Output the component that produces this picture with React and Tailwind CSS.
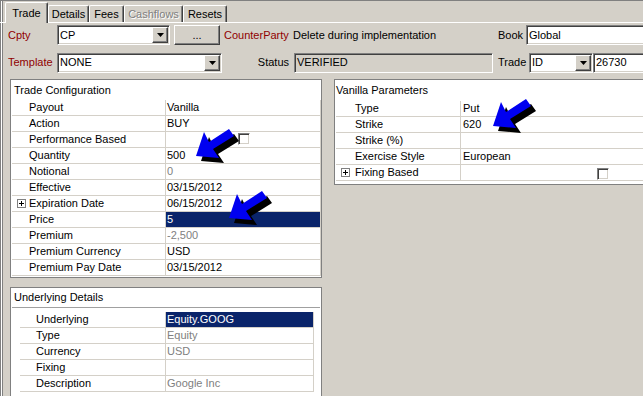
import React from 'react';

const sunken =
  'border border-t-[#808080] border-l-[#808080] border-b-white border-r-white shadow-[inset_1px_1px_0_#404040,inset_-1px_-1px_0_#d4d0c8]';
const raised =
  'border border-t-white border-l-white border-b-[#404040] border-r-[#404040] shadow-[inset_-1px_-1px_0_#808080] bg-[#d4d0c8]';

const tradeRows = [
  { label: 'Payout', value: 'Vanilla' },
  { label: 'Action', value: 'BUY' },
  { label: 'Performance Based', check: 'ml-[71px] mt-[1px]' },
  { label: 'Quantity', value: '500' },
  { label: 'Notional', value: '0', gray: true },
  { label: 'Effective', value: '03/15/2012' },
  { label: 'Expiration Date', value: '06/15/2012', plus: true },
  { label: 'Price', value: '5', sel: true },
  { label: 'Premium', value: '-2,500', gray: true },
  { label: 'Premium Currency', value: 'USD' },
  { label: 'Premium Pay Date', value: '03/15/2012' },
];

const underlyingRows = [
  { label: 'Underlying', value: 'Equity.GOOG', sel: true },
  { label: 'Type', value: 'Equity', gray: true },
  { label: 'Currency', value: 'USD', gray: true },
  { label: 'Fixing', value: '' },
  { label: 'Description', value: 'Google Inc', gray: true },
];

const vanillaRows = [
  { label: 'Type', value: 'Put' },
  { label: 'Strike', value: '620' },
  { label: 'Strike (%)', value: '' },
  { label: 'Exercise Style', value: 'European' },
  { label: 'Fixing Based', check: 'ml-[134px] mt-[3px]', plus: true },
];

// arrow outline, relative to its tip
const ARROW = [[0, 0], [23, 2], [17, -7], [38, -20], [33, -27], [13, -14], [8, -24]];
const arrowTips = [[196, 155], [229, 217], [493, 125]];

function pts(tx, ty) {
  return ARROW.map(([x, y]) => `${tx + x},${ty + y}`).join(' ');
}

function Tab({ label, w, active, disabled }) {
  return (
    <div
      className={`${w} shrink-0 flex items-center justify-center border-t border-l border-t-white border-l-white border-r border-r-[#404040] shadow-[inset_-1px_0_0_#808080] rounded-t-[2px] ${
        active ? 'h-[21px] -mb-px relative bg-[#d4d0c8]' : 'h-[17px]'
      } ${disabled ? 'text-[#808080] [text-shadow:1px_1px_0_#ffffff]' : ''}`}
    >
      {label}
    </div>
  );
}

function Combo({ w, text }) {
  return (
    <div className={`${w} shrink-0 h-[20px] flex items-center bg-white ${sunken}`}>
      <span className="flex-1 pl-[2px] whitespace-nowrap">{text}</span>
      <div className={`w-[16px] h-[16px] mr-[1px] flex items-center justify-center ${raised}`}>
        <svg width="7" height="4" viewBox="0 0 7 4">
          <polygon points="0,0 7,0 3.5,4" fill="#000" />
        </svg>
      </div>
    </div>
  );
}

function TextBox({ w, text, disabled }) {
  return (
    <div
      className={`${w} shrink-0 h-[20px] flex items-center pl-[2px] whitespace-nowrap ${disabled ? 'bg-[#d4d0c8]' : 'bg-white'} ${sunken}`}
    >
      {text}
    </div>
  );
}

function Check({ cls }) {
  return (
    <div
      className={`${cls} w-[12px] h-[12px] shrink-0 self-start bg-white border border-t-[#808080] border-l-[#808080] border-b-white border-r-white shadow-[inset_1px_1px_0_#404040,inset_-1px_-1px_0_#d4d0c8]`}
    />
  );
}

function Plus({ cls }) {
  return (
    <svg width="9" height="9" viewBox="0 0 9 9" className={`${cls} shrink-0`}>
      <rect x="0.5" y="0.5" width="8" height="8" fill="#fff" stroke="#808080" />
      <path d="M2 4.5h5M4.5 2v5" stroke="#000" />
    </svg>
  );
}

function Row({ row, labelW, pad, plusPad, plusGap, valuePad }) {
  return (
    <div className="flex h-[16px] border-b border-[#d4d0c8]">
      <div className={`${labelW} shrink-0 ${row.plus ? plusPad : pad} flex items-center border-r border-[#d4d0c8] whitespace-nowrap`}>
        {row.plus && <Plus cls={plusGap} />}
        <span className="leading-[15px]">{row.label}</span>
      </div>
      <div
        className={`flex-1 flex items-center leading-[15px] whitespace-nowrap ${valuePad} ${row.sel ? 'bg-[#0a246a] text-white' : ''} ${
          row.gray ? 'text-[#808080]' : ''
        }`}
      >
        {row.value}
        {row.check && <Check cls={row.check} />}
      </div>
    </div>
  );
}

export default function App() {
  return (
    <div className="relative w-[643px] h-[396px] overflow-hidden bg-[#d4d0c8] border-t border-[#808080] text-[11px] text-black font-['Liberation_Sans',Arial,sans-serif] shadow-[inset_1px_0_0_#808080,inset_2px_0_0_#ffffff,inset_3px_0_0_#808080]">
      {/* tabs */}
      <div className="flex items-end h-[22px] pl-[5px] border-b border-white">
        <Tab label="Trade" w="w-[43px]" active />
        <Tab label="Details" w="w-[41px]" />
        <Tab label="Fees" w="w-[35px]" />
        <Tab label="Cashflows" w="w-[59px]" disabled />
        <Tab label="Resets" w="w-[44px]" />
      </div>

      {/* header fields */}
      <div className="flex items-center h-[20px] mt-[2px] w-max">
        <span className="w-[57px] shrink-0 pl-[8px] text-[#900000]">Cpty</span>
        <Combo w="w-[113px]" text="CP" />
        <button className={`ml-[4px] w-[46px] h-[20px] shrink-0 flex items-center justify-center ${raised}`}>...</button>
        <span className="ml-[4px] w-[69px] shrink-0 text-[#900000]">CounterParty</span>
        <span className="w-[205px] shrink-0 whitespace-nowrap">Delete during implementation</span>
        <span className="w-[28px] shrink-0">Book</span>
        <TextBox w="w-[130px]" text="Global" />
      </div>
      <div className="flex items-center h-[21px] mt-[7px] w-max">
        <span className="w-[57px] shrink-0 pl-[8px] text-[#900000]">Template</span>
        <Combo w="w-[165px]" text="NONE" />
        <span className="w-[72px] shrink-0 pr-[5px] text-right">Status</span>
        <TextBox w="w-[199px]" text="VERIFIED" disabled />
        <span className="ml-[5px] w-[31px] shrink-0">Trade</span>
        <Combo w="w-[64px]" text="ID" />
        <TextBox w="w-[60px]" text="26730" />
      </div>

      {/* group boxes */}
      <div className="flex mt-[6px] pl-[10px] w-max">
        <div className="flex flex-col w-[312px] shrink-0">
          <div className="h-[199px] border border-[#808080] bg-white">
            <div className="h-[20px] pl-[3px] leading-[20px]">Trade Configuration</div>
            <div className="ml-[1px] w-[309px] border-r border-[#d4d0c8]">
              {tradeRows.map((r) => (
                <Row key={r.label} row={r} labelW="w-[154px]" pad="pl-[17px]" plusPad="pl-[5px]" plusGap="mr-[3px]" valuePad="pl-[1px]" />
              ))}
            </div>
          </div>
          <div className="mt-[9px] h-[130px] border border-[#808080] bg-white">
            <div className="mx-[1px] h-[20px] pl-[2px] leading-[19px] border-b border-[#a0a0a0]">Underlying Details</div>
            <div className="mt-[4px] ml-[9px] w-[294px] border-r border-[#d4d0c8]">
              {underlyingRows.map((r) => (
                <Row key={r.label} row={r} labelW="w-[146px]" pad="pl-[16px]" plusPad="pl-[5px]" plusGap="mr-[3px]" valuePad="pl-[1px]" />
              ))}
            </div>
          </div>
        </div>

        <div className="ml-[12px] w-[320px] h-[106px] shrink-0 border border-[#808080] bg-white">
          <div className="h-[21px] pl-[1px] leading-[21px]">Vanilla Parameters</div>
          <div className="ml-[1px]">
            {vanillaRows.map((r) => (
              <Row key={r.label} row={r} labelW="w-[125px]" pad="pl-[19px]" plusPad="pl-[5px]" plusGap="mr-[5px]" valuePad="pl-[2px]" />
            ))}
          </div>
        </div>
      </div>

      {/* blue arrows pasted over the screenshot */}
      <svg className="absolute inset-0 pointer-events-none" width="643" height="396">
        {arrowTips.map(([x, y]) => (
          <g key={x}>
            <polygon points={pts(x + 5, y + 5)} fill="#000" />
            <polygon points={pts(x, y)} fill="#0000f0" />
          </g>
        ))}
      </svg>
    </div>
  );
}
